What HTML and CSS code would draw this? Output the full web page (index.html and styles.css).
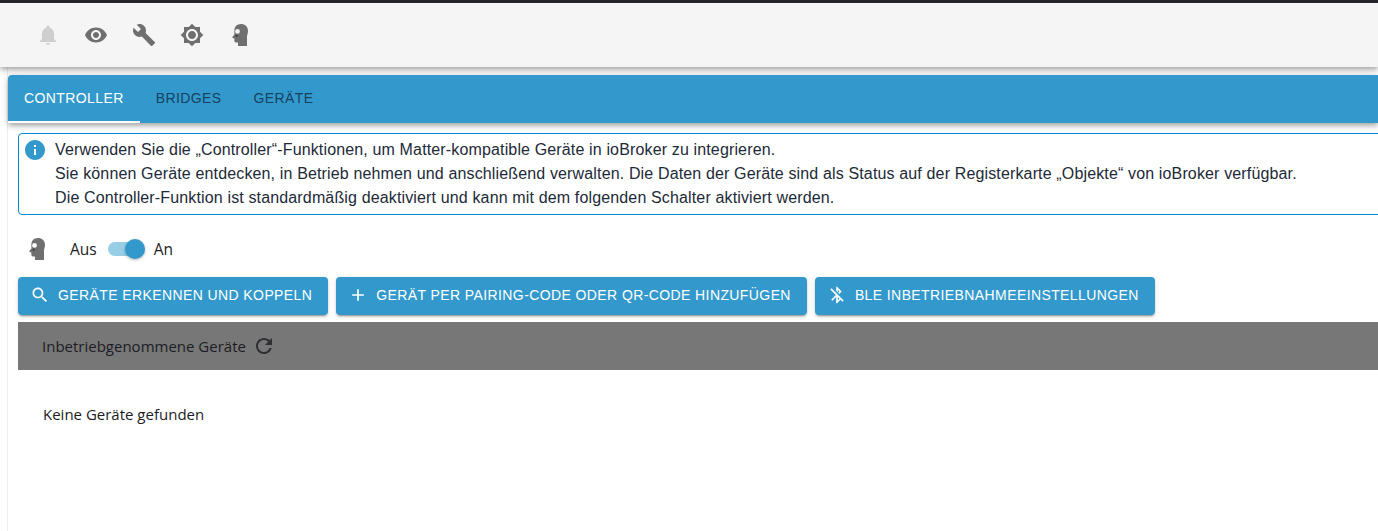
FILE: index.html
```html
<!DOCTYPE html>
<html lang="de">
<head>
<meta charset="utf-8">
<title>Matter</title>
<link rel="stylesheet" href="styles.css">
</head>
<body>
<header class="toolbar">
  <svg class="tool-icon bell" viewBox="0 0 24 24"><path d="M12 22c1.100 0 2-.9 2-2h-4c0 1.100.89 2 2 2zm6-6v-5c0-3.070-1.640-5.640-4.500-6.320V4c0-.83-.67-1.500-1.500-1.500s-1.500.67-1.500 1.500v.68C7.630 5.360 6 7.920 6 11v5l-2 2v1h16v-1l-2-2z"/></svg>
  <svg class="tool-icon" viewBox="0 0 24 24"><path d="M12 4.500C7 4.500 2.730 7.610 1 12c1.730 4.390 6 7.500 11 7.500s9.270-3.110 11-7.500c-1.730-4.390-6-7.500-11-7.500zM12 17c-2.760 0-5-2.240-5-5s2.240-5 5-5 5 2.240 5 5-2.240 5-5 5zm0-8c-1.660 0-3 1.340-3 3s1.340 3 3 3 3-1.340 3-3-1.340-3-3-3z"/></svg>
  <svg class="tool-icon" viewBox="0 0 24 24"><path d="M22.700 19l-9.100-9.100c.9-2.300.4-5-1.500-6.900-2-2-5-2.400-7.400-1.300L9 6 6 9 1.600 4.700C.4 7.100.9 10.100 2.900 12.100c1.900 1.900 4.600 2.400 6.900 1.500l9.100 9.100c.4.4 1 .4 1.400 0l2.300-2.300c.5-.4.5-1.100.1-1.400z"/></svg>
  <svg class="tool-icon" viewBox="0 0 24 24"><path d="M20 8.690V4h-4.690L12 .69 8.690 4H4v4.690L.69 12 4 15.310V20h4.690L12 23.310 15.310 20H20v-4.690L23.310 12 20 8.690zM12 18c-3.310 0-6-2.690-6-6s2.690-6 6-6 6 2.690 6 6-2.690 6-6 6zm0-10c-2.210 0-4 1.790-4 4s1.790 4 4 4 4-1.790 4-4-1.790-4-4-4z"/></svg>
  <svg class="tool-icon" viewBox="0 0 24 24"><path fill-rule="evenodd" d="M13 1c3.800 0 7 2.700 7 6.500 0 2.200-.5 4-1 5.500v10h-9v-3.500H7.800c-.9 0-1.400-.6-1.400-1.400V15.500l-1.600-.4c-.5-.2-.6-.6-.4-1l2-2.700V7.500C6.400 3.800 9 1 13 1zM9.500 6a2.400 2.400 0 1 0 0 4.800 2.400 2.400 0 0 0 0-4.800z"/><circle cx="8.700" cy="12.800" r="1" fill="#333"/></svg>
</header>
<main class="page">
  <nav class="tabs">
    <a class="tab active">Controller</a>
    <a class="tab">Bridges</a>
    <a class="tab">Geräte</a>
  </nav>
  <section class="content">
    <div class="info">
      <svg class="info-icon" viewBox="0 0 24 24"><path d="M12 2C6.480 2 2 6.480 2 12s4.480 10 10 10 10-4.480 10-10S17.520 2 12 2zm1 15h-2v-6h2v6zm0-8h-2V7h2v2z"/></svg>
      <div class="info-text">
        <div>Verwenden Sie die „Controller“-Funktionen, um Matter-kompatible Geräte in ioBroker zu integrieren.</div>
        <div>Sie können Geräte entdecken, in Betrieb nehmen und anschließend verwalten. Die Daten der Geräte sind als Status auf der Registerkarte „Objekte“ von ioBroker verfügbar.</div>
        <div>Die Controller-Funktion ist standardmäßig deaktiviert und kann mit dem folgenden Schalter aktiviert werden.</div>
      </div>
    </div>
    <div class="switch-row">
      <svg class="head-icon" viewBox="0 0 24 24"><path fill-rule="evenodd" d="M13 1c3.800 0 7 2.700 7 6.500 0 2.200-.5 4-1 5.500v10h-9v-3.500H7.800c-.9 0-1.400-.6-1.400-1.400V15.500l-1.600-.4c-.5-.2-.6-.6-.4-1l2-2.700V7.500C6.400 3.800 9 1 13 1zM9.500 6a2.400 2.400 0 1 0 0 4.800 2.400 2.400 0 0 0 0-4.800z"/><circle cx="8.700" cy="12.800" r="1" fill="#333"/></svg>
      <span class="off-label">Aus</span>
      <span class="switch"><span class="track"></span><span class="thumb"></span></span>
      <span class="on-label">An</span>
    </div>
    <div class="actions">
      <button class="btn"><svg viewBox="0 0 24 24"><path d="M15.500 14h-.79l-.28-.27C15.410 12.590 16 11.110 16 9.500 16 5.910 13.090 3 9.500 3S3 5.910 3 9.500 5.910 16 9.500 16c1.610 0 3.090-.59 4.230-1.570l.27.28v.79l5 4.990L20.490 19l-4.990-5zm-6 0C7.010 14 5 11.990 5 9.500S7.010 5 9.500 5 14 7.010 14 9.500 11.990 14 9.500 14z"/></svg>Geräte erkennen und koppeln</button>
      <button class="btn"><svg viewBox="0 0 24 24"><path d="M19 13h-6v6h-2v-6H5v-2h6V5h2v6h6v2z"/></svg>Gerät per Pairing-Code oder QR-Code hinzufügen</button>
      <button class="btn"><svg viewBox="0 0 24 24"><path d="M13 5.830l1.880 1.880-1.600 1.600 1.410 1.410 3.020-3.020L12 2h-1v5.030l2 2v-3.200zM5.410 4L4 5.410 10.590 12 5 17.590 6.410 19 11 14.410V22h1l4.290-4.290 2.300 2.300L20 18.590 5.410 4zM13 18.170v-3.760l1.880 1.880L13 18.170z"/></svg>BLE Inbetriebnahmeeinstellungen</button>
    </div>
    <div class="table-head">
      <span>Inbetriebgenommene Geräte</span>
      <svg viewBox="0 0 24 24"><path d="M17.650 6.350C16.200 4.900 14.210 4 12 4c-4.420 0-7.990 3.580-7.990 8s3.570 8 7.990 8c3.730 0 6.840-2.550 7.730-6h-2.080c-.82 2.330-3.040 4-5.650 4-3.310 0-6-2.690-6-6s2.690-6 6-6c1.660 0 3.140.69 4.220 1.780L13 11h7V4l-2.350 2.350z"/></svg>
    </div>
    <p class="empty">Keine Geräte gefunden</p>
  </section>
</main>
</body>
</html>
```
FILE: styles.css
```css
* { box-sizing: border-box; }
html, body { height: 100%; }
body {
  margin: 0;
  background: #fff;
  border-top: 3px solid #24242c;
  font-family: "Liberation Sans", Arial, sans-serif;
  overflow: hidden;
}
.toolbar {
  height: 64px;
  background: #f5f5f5;
  display: flex;
  align-items: center;
  gap: 24px;
  padding-left: 36px;
  box-shadow: 0 2px 4px -1px rgba(0,0,0,.2), 0 4px 5px 0 rgba(0,0,0,.14), 0 1px 10px 0 rgba(0,0,0,.12);
  position: relative;
}
.tool-icon { width: 24px; height: 24px; fill: #6f6f6f; }
.tool-icon.bell { fill: #cfcfcf; }
.page {
  margin-left: 7px;
  border-left: 1px solid #eee;
  padding-top: 8px;
  height: calc(100% - 64px);
}
.tabs {
  height: 48px;
  display: flex;
  background: #3399cc;
  border-radius: 4px 0 0 0;
  box-shadow: 0 2px 4px -1px rgba(0,0,0,.2), 0 4px 5px 0 rgba(0,0,0,.14), 0 1px 10px 0 rgba(0,0,0,.12);
  position: relative;
}
.tab {
  display: flex;
  align-items: center;
  justify-content: center;
  padding: 0 16px 2px;
  font-size: 14px;
  font-weight: 400;
  letter-spacing: .4px;
  text-transform: uppercase;
  color: #14425f;
}
.tab.active {
  color: #fff;
  border-bottom: 2px solid #fff;
  padding: 0 16px;
}
.content { padding: 10px 0 0 10px; }
.info {
  height: 82px;
  margin-right: -20px;
  border: 1px solid #0288d1;
  border-radius: 4px;
  display: flex;
  padding: 4px 0 0 4px;
  color: #1d2a38;
  font-size: 16px;
  letter-spacing: .145px;
  line-height: 24px;
}
.info-icon { width: 24px; height: 24px; fill: #3399cc; flex: none; margin-right: 8px; }
.info-text { white-space: nowrap; }
.switch-row {
  display: flex;
  align-items: center;
  height: 38px;
  margin-top: 15px;
  padding-left: 7px;
  font-family: "Open Sans", sans-serif;
  font-size: 15.5px;
  color: #222;
}
.head-icon { width: 24px; height: 24px; fill: #6f6f6f; flex: none; }
.off-label { margin-left: 21px; }
.on-label { margin-left: 8px; }
.switch { position: relative; width: 38px; height: 20px; margin-left: 11px; flex: none; }
.track { position: absolute; left: 0; top: 3px; width: 35px; height: 14px; border-radius: 7px; background: #98cde6; }
.thumb { position: absolute; right: 1px; top: 0; width: 20px; height: 20px; border-radius: 50%; background: #3399cc; box-shadow: 0 1px 3px rgba(0,0,0,.3); }
.actions { display: flex; gap: 8px; margin-top: 9px; }
.btn {
  height: 38px;
  display: flex;
  align-items: center;
  gap: 8px;
  padding: 0 16px 2px 12px;
  border: 0;
  border-radius: 4px;
  background: #3399cc;
  color: #fff;
  font-family: "Liberation Sans", Arial, sans-serif;
  font-size: 14px;
  font-weight: 400;
  letter-spacing: .4px;
  text-transform: uppercase;
  box-shadow: 0 3px 1px -2px rgba(0,0,0,.2), 0 2px 2px 0 rgba(0,0,0,.14), 0 1px 5px 0 rgba(0,0,0,.12);
}
.btn svg { width: 20px; height: 20px; fill: #fff; flex: none; }
.table-head {
  height: 48px;
  margin-top: 7px;
  background: #777;
  display: flex;
  align-items: center;
  gap: 6px;
  padding-left: 24px;
  font-family: "Open Sans", sans-serif;
  font-size: 15px;
  color: #1c1c24;
}
.table-head svg { width: 24px; height: 24px; fill: #2e2e33; }
.empty {
  margin: 34px 0 0 25px;
  font-family: "Open Sans", sans-serif;
  font-size: 15px;
  line-height: 20px;
  color: #1c1c24;
}
```
